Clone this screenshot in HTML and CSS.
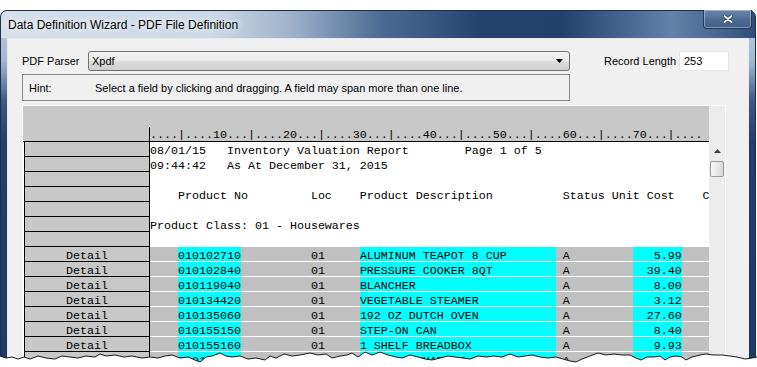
FILE: index.html
```html
<!DOCTYPE html>
<html>
<head>
<meta charset="utf-8">
<title>Data Definition Wizard - PDF File Definition</title>
<link rel="stylesheet" href="styles.css">
</head>
<body>
<div class="window">
  <div class="titlebar">
    <span class="title">Data Definition Wizard - PDF File Definition</span>
    <div class="close">
      <svg width="10" height="8" viewBox="0 0 10 8"><path d="M1.5 1 L8.5 7 M8.5 1 L1.5 7" stroke="#23395a" stroke-width="3.4" stroke-linecap="round"/><path d="M1.5 1 L8.5 7 M8.5 1 L1.5 7" stroke="#ffffff" stroke-width="1.8" stroke-linecap="round"/></svg>
    </div>
  </div>
  <div class="client">
    <div class="toprow">
      <span class="lbl">PDF Parser</span>
      <div class="combo"><span>Xpdf</span><svg class="arrow" width="7" height="4" viewBox="0 0 7 4"><path d="M0 0 H7 L3.5 4 Z" fill="#000"/></svg></div>
      <span class="lbl2">Record Length</span>
      <div class="input">253</div>
    </div>
    <div class="hint"><span class="hint-l">Hint:</span><span>Select a field by clicking and dragging. A field may span more than one line.</span></div>
    <div class="panel">
      <div class="grid">
        <div class="ghead">
          <div class="gh-left"></div>
          <div class="gh-right"><div class="ruler">....|....10...|....20...|....30...|....40...|....50...|....60...|....70...|....</div></div>
        </div>
        <div class="row"><div class="lc"></div><div class="dc">08/01/15   Inventory Valuation Report        Page 1 of 5</div></div>
        <div class="row"><div class="lc"></div><div class="dc">09:44:42   As At December 31, 2015</div></div>
        <div class="row"><div class="lc"></div><div class="dc"></div></div>
        <div class="row"><div class="lc"></div><div class="dc">    Product No         Loc    Product Description          Status Unit Cost    C</div></div>
        <div class="row"><div class="lc"></div><div class="dc"></div></div>
        <div class="row"><div class="lc"></div><div class="dc">Product Class: 01 - Housewares</div></div>
        <div class="row"><div class="lc"></div><div class="dc"></div></div>
        <div class="row detail"><div class="lc">Detail</div><div class="dc">    <span class="hl">010102710</span>          01     <span class="hl">ALUMINUM TEAPOT 8 CUP       </span> A         <span class="hl">   5.99</span></div></div>
        <div class="row detail"><div class="lc">Detail</div><div class="dc">    <span class="hl">010102840</span>          01     <span class="hl">PRESSURE COOKER 8QT         </span> A         <span class="hl">  39.40</span></div></div>
        <div class="row detail"><div class="lc">Detail</div><div class="dc">    <span class="hl">010119040</span>          01     <span class="hl">BLANCHER                    </span> A         <span class="hl">   8.00</span></div></div>
        <div class="row detail"><div class="lc">Detail</div><div class="dc">    <span class="hl">010134420</span>          01     <span class="hl">VEGETABLE STEAMER           </span> A         <span class="hl">   3.12</span></div></div>
        <div class="row detail"><div class="lc">Detail</div><div class="dc">    <span class="hl">010135060</span>          01     <span class="hl">192 OZ DUTCH OVEN           </span> A         <span class="hl">  27.60</span></div></div>
        <div class="row detail"><div class="lc">Detail</div><div class="dc">    <span class="hl">010155150</span>          01     <span class="hl">STEP-ON CAN                 </span> A         <span class="hl">   8.40</span></div></div>
        <div class="row detail"><div class="lc">Detail</div><div class="dc">    <span class="hl">010155160</span>          01     <span class="hl">1 SHELF BREADBOX            </span> A         <span class="hl">   9.93</span></div></div>
        <div class="row detail"><div class="lc">Detail</div><div class="dc">    <span class="hl">010155170</span>          01     <span class="hl">2 SHELF WHATNOT LIST        </span> A         <span class="hl">  12.95</span></div></div>
      </div>
      <div class="vscroll">
        <div class="vs-top"></div>
        <div class="vs-up"><svg width="7" height="4" viewBox="0 0 7 4"><path d="M0 4 H7 L3.5 0 Z" fill="#404040"/></svg></div>
        <div class="vs-thumb"></div>
      </div>
    </div>
  </div>
</div>
<svg class="tear" width="757" height="20" viewBox="0 347 757 20">
  <polygon fill="#ffffff" points="0,367 0,356 6,358 12,357 18,359 24,357 30,359 38,356 46,358 55,359 62,356 70,357 78,358 86,356 95,357 100,354 106,356 115,355 124,357 132,356 142,358 150,357 158,358 165,356 172,355 180,358 188,357 195,360 200,362 206,357 212,356 220,353 226,356 232,357 240,356 248,359 256,358 265,360 270,356 276,358 284,354 292,356 300,355 310,353 318,355 326,354 332,358 340,356 347,355 352,353 358,357 365,352 372,355 380,352 388,355 396,357 402,358 410,355 418,357 425,359 432,360 440,358 448,356 455,357 463,358 470,359 478,356 486,357 494,356 502,357 510,354 518,357 525,356 532,355 540,357 548,358 556,357 563,359 570,361 576,362 582,359 590,356 598,353 606,355 614,354 622,355 630,355 636,358 641,360 647,357 654,357 660,356 665,360 670,357 676,356 682,357 686,360 692,357 700,355 706,354 714,355 722,355 730,356 737,357 745,359 752,358 757,357 757,367"/>
  <polyline fill="none" stroke="#1a1a1a" stroke-width="1" points="0,356 6,358 12,357 18,359 24,357 30,359 38,356 46,358 55,359 62,356 70,357 78,358 86,356 95,357 100,354 106,356 115,355 124,357 132,356 142,358 150,357 158,358 165,356 172,355 180,358 188,357 195,360 200,362 206,357 212,356 220,353 226,356 232,357 240,356 248,359 256,358 265,360 270,356 276,358 284,354 292,356 300,355 310,353 318,355 326,354 332,358 340,356 347,355 352,353 358,357 365,352 372,355 380,352 388,355 396,357 402,358 410,355 418,357 425,359 432,360 440,358 448,356 455,357 463,358 470,359 478,356 486,357 494,356 502,357 510,354 518,357 525,356 532,355 540,357 548,358 556,357 563,359 570,361 576,362 582,359 590,356 598,353 606,355 614,354 622,355 630,355 636,358 641,360 647,357 654,357 660,356 665,360 670,357 676,356 682,357 686,360 692,357 700,355 706,354 714,355 722,355 730,356 737,357 745,359 752,358 757,357"/>
</svg>
</body>
</html>
```
FILE: styles.css
```css
* { box-sizing: border-box; }
html, body { margin: 0; padding: 0; }
body {
  width: 757px;
  height: 367px;
  overflow: hidden;
  background: #ffffff;
  position: relative;
  font-family: "Liberation Sans", Arial, sans-serif;
  font-size: 11px;
  color: #000;
}
.window {
  margin-top: 10px;
  width: 756px;
  height: 420px;
  border: 1px solid #1c2f4c;
  border-radius: 7px 7px 0 0;
  background:
    linear-gradient(90deg, #d5dfea 0px, #cdd9e6 210px, #9fb2ca 290px, #4c6b94 380px, #23426e 480px, #21406c 560px, #4a6a95 630px, #6382aa 670px, #45658f 720px, #2d4c77 756px) top left / 100% 27px no-repeat,
    linear-gradient(180deg, #c3d0df 0px, #a5b7cd 50px, #3a5a84 90px, #213f69 130px, #1d3a63 420px);
}
.titlebar {
  height: 27px;
  display: flex;
  justify-content: space-between;
  padding-left: 7px;
}
.title {
  align-self: center;
  font-size: 12px;
  color: #000;
  text-shadow: 0 0 6px #fff, 0 0 10px rgba(255,255,255,0.8);
}
.close {
  margin-top: -1px;
  margin-right: 3px;
  width: 49px;
  height: 19px;
  border: 1px solid #263a58;
  border-top: none;
  border-radius: 0 0 4px 4px;
  background: linear-gradient(180deg, #6a87ad 0%, #4f6d96 50%, #3f5e88 100%);
  box-shadow: inset 0 0 0 1px rgba(255,255,255,0.35);
  display: flex;
  align-items: center;
  justify-content: center;
}
.client {
  margin: 0 6px;
  height: 340px;
  border: 1px solid #e4eaf1;
  background: #f0f0f0;
  padding: 12px 0 0 14px;
}
.toprow {
  display: flex;
  align-items: center;
  height: 20px;
}
.lbl { width: 66px; white-space: nowrap; }
.combo {
  width: 482px;
  height: 20px;
  border: 1px solid #707070;
  border-radius: 3px;
  background: linear-gradient(180deg, #f2f2f2 0%, #ebebeb 50%, #dddddd 50%, #cfcfcf 100%);
  display: flex;
  align-items: center;
  justify-content: space-between;
  padding: 0 6px 0 3px;
}
.arrow { display: block; }
.lbl2 { margin-left: 34px; width: 75px; white-space: nowrap; }
.input {
  width: 50px;
  height: 20px;
  background: #fff;
  border: 1px solid #e2e5ea;
  padding-left: 4px;
  line-height: 18px;
}
.hint {
  margin-top: 3px;
  width: 548px;
  height: 27px;
  border: 1px solid #8a8a8a;
  display: flex;
  align-items: center;
  padding-left: 6px;
  white-space: nowrap;
}
.hint-l { width: 66px; }
.panel {
  margin-top: 4px;
  width: 704px;
  height: 300px;
  border: 1px solid #fafafa;
  display: flex;
}
.grid {
  width: 686px;
  background: #fff;
  overflow: hidden;
  font-family: "Liberation Mono", "Courier New", monospace;
  font-size: 11.67px;
  color: #000;
}
.ghead {
  height: 36px;
  background: #c8c8c8;
  border-bottom: 1px solid #000;
  display: flex;
}
.gh-left { width: 126px; }
.gh-right { flex: 1; padding-top: 21px; }
.ruler {
  height: 14px;
  line-height: 17px;
  border-left: 1px solid #000;
  white-space: pre;
}
.row { display: flex; height: 15px; }
.lc {
  margin-left: 1px;
  width: 126px;
  background: #c8c8c8;
  border-left: 1px solid #000;
  border-right: 1px solid #000;
  border-bottom: 1px solid #000;
  text-align: center;
  line-height: 18px;
}
.dc {
  width: 559px;
  flex: none;
  background: #fff;
  border-bottom: 1px solid #fff;
  white-space: pre;
  line-height: 18px;
}
.row.detail .dc { background: #c0c0c0; }
.hl {
  display: inline-block;
  height: 14px;
  vertical-align: top;
  background: #00ffff;
}
.vscroll {
  width: 16px;
  background: #ececec;
}
.vs-top { height: 36px; }
.vs-up {
  height: 18px;
  display: flex;
  align-items: center;
  justify-content: center;
}
.vs-up svg { display: block; }
.vs-thumb {
  margin: 1px 0 0 1px;
  width: 14px;
  height: 16px;
  border: 1px solid #9a9a9a;
  border-radius: 2px;
  background: linear-gradient(90deg, #f6f6f6 0%, #e9e9e9 50%, #d9d9d9 100%);
}
.tear {
  position: absolute;
  left: 0;
  top: 347px;
  display: block;
}
```
